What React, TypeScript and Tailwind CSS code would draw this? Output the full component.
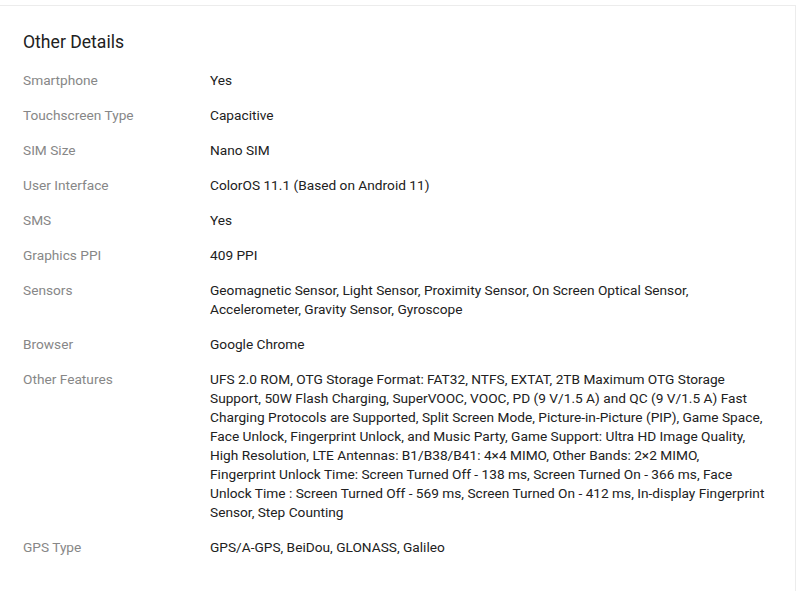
import React from "react";

const rows: [string, string][] = [
  ["Smartphone", "Yes"],
  ["Touchscreen Type", "Capacitive"],
  ["SIM Size", "Nano SIM"],
  ["User Interface", "ColorOS 11.1 (Based on Android 11)"],
  ["SMS", "Yes"],
  ["Graphics PPI", "409 PPI"],
  [
    "Sensors",
    "Geomagnetic Sensor, Light Sensor, Proximity Sensor, On Screen Optical Sensor, Accelerometer, Gravity Sensor, Gyroscope",
  ],
  ["Browser", "Google Chrome"],
  [
    "Other Features",
    "UFS 2.0 ROM, OTG Storage Format: FAT32, NTFS, EXTAT, 2TB Maximum OTG Storage Support, 50W Flash Charging, SuperVOOC, VOOC, PD (9 V/1.5 A) and QC (9 V/1.5 A) Fast Charging Protocols are Supported, Split Screen Mode, Picture-in-Picture (PIP), Game Space, Face Unlock, Fingerprint Unlock, and Music Party, Game Support: Ultra HD Image Quality, High Resolution, LTE Antennas: B1/B38/B41: 4×4 MIMO, Other Bands: 2×2 MIMO, Fingerprint Unlock Time: Screen Turned Off - 138 ms, Screen Turned On - 366 ms, Face Unlock Time : Screen Turned Off - 569 ms, Screen Turned On - 412 ms, In-display Fingerprint Sensor, Step Counting",
  ],
  ["GPS Type", "GPS/A-GPS, BeiDou, GLONASS, Galileo"],
];

export default function App() {
  return (
    <div className="w-[798px] h-[591px] bg-white overflow-hidden" style={{ fontFamily: "Roboto, Arial, sans-serif" }}>
      <div className="h-[5px] bg-white" />
      <div className="w-[796px] h-[586px] bg-white border-t border-r border-[#ececec] pl-[23px] pr-6 pt-[21px]">
        <div className="text-[17.6px] leading-[28px] text-[#212121] pt-[1px] pb-[15px]">Other Details</div>
        <div className="flex flex-col">
          {rows.map(([k, v]) => (
            <div key={k} className="flex text-[13.7px] leading-[19px] pb-[16px]">
              <div className="w-[187px] shrink-0 text-[#878787] pr-2">{k}</div>
              <div className="w-[558px] text-[#212121]">{v}</div>
            </div>
          ))}
        </div>
      </div>
    </div>
  );
}
